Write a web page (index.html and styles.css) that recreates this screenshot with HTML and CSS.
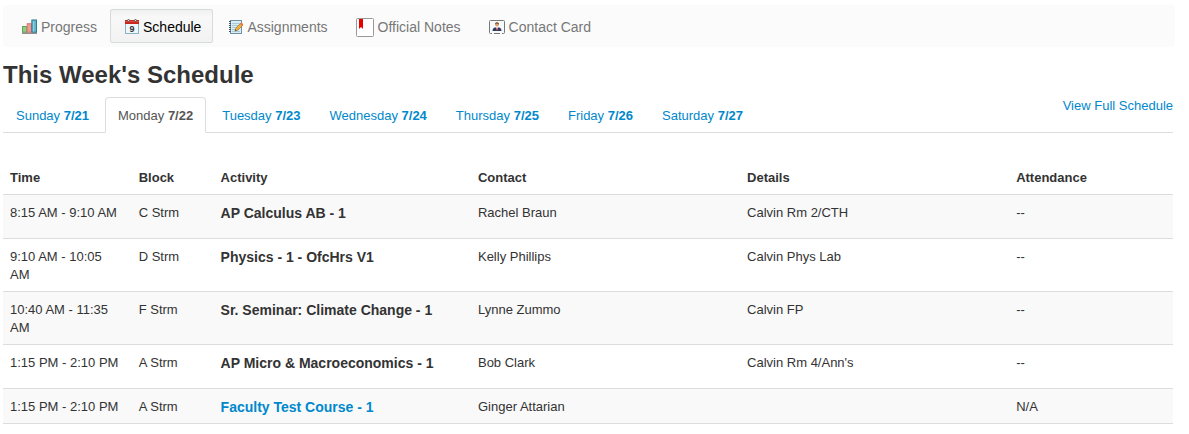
FILE: index.html
```
<!DOCTYPE html>
<html lang="en">
<head>
  <meta charset="UTF-8" />
  <meta name="viewport" content="width=device-width, initial-scale=1.0" />
  <title>This Week's Schedule</title>
  <link rel="stylesheet" href="styles.css">
</head>
<body>
  <nav class="navbar">
    <a href="#progress">
      <svg class="icon" width="15" height="16" viewBox="0 0 16 16">
        <rect x="0" y="14" width="16" height="1" fill="#4a3c3c" />
        <rect x="0.5" y="7.5" width="4.5" height="6" fill="#8fce85" stroke="#5aa357" />
        <rect x="5.5" y="4.5" width="4.5" height="9" fill="#f29a94" stroke="#dd6f6a" />
        <rect x="10.5" y="0.5" width="5" height="13" fill="#62b5cb" stroke="#29758f" />
        <rect x="12" y="2" width="1" height="11" fill="#9cd7e4" />
      </svg>
      Progress
    </a>
    <a href="#schedule" class="active">
      <svg class="icon" width="14" height="16" viewBox="1 0 14 16">
        <rect x="1.5" y="1.5" width="13" height="13" fill="#edf7fc" stroke="#8cb2c8" />
        <rect x="1" y="1" width="14" height="4" fill="#c8281e" />
        <rect x="1" y="2" width="14" height="1" fill="#e04a3c" />
        <circle cx="4.5" cy="1.5" r="1" fill="#ddd" stroke="#555" />
        <circle cx="11.5" cy="1.5" r="1" fill="#ddd" stroke="#555" />
        <text class="day" x="8" y="13" text-anchor="middle">9</text>
      </svg>
      Schedule
    </a>
    <a href="#assignments">
      <svg class="icon" width="14" height="16" viewBox="1 0 14 16">
        <rect x="2.5" y="1.5" width="11" height="13" fill="#d9ecf3" stroke="#6d93a5" />
        <path d="M4 4.5h8M4 6.5h8M4 8.5h7M4 10.5h5M4 12.5h8" stroke="#a9cbd9" />
        <path d="M1 2.5h2M1 4.5h2M1 6.5h2M1 8.5h2M1 10.5h2M1 12.5h2" stroke="#44545c" />
        <path d="M7 12l1-3 5-5 2 2-5 5z" fill="#f5b33c" stroke="#a56b1f" stroke-width="0.7" />
        <path d="M12 5l1.500-1.500 2 2L14 7z" fill="#e4764f" />
        <path d="M7 12l.5-1.500 1 1z" fill="#333" />
      </svg>
      Assignments
    </a>
    <a href="#notes">
      <svg class="icon" width="18" height="19" viewBox="0 0 18 19">
        <rect x="0.5" y="0.5" width="17" height="18" rx="1" fill="#fff" stroke="#999" />
        <path d="M3 1h4v10l-2-2-2 2z" fill="#e60000" />
      </svg>
      Official Notes
    </a>
    <a href="#contact">
      <svg class="icon" width="16" height="16" viewBox="0 0 16 16">
        <rect x="0.5" y="1.500" width="15" height="13" rx="1" fill="#f4f9fc" stroke="#777" />
        <path d="M3.500 12c0-3 2-4 4.500-4s4.500 1 4.500 4z" fill="#2d3b60" />
        <path d="M6.500 8h3L8 11.500z" fill="#fff" />
        <path d="M7.500 8.500h1v3h-1z" fill="#c22" />
        <circle cx="8" cy="5.500" r="2" fill="#dc9c6c" />
        <path d="M6 5.500c0-3 4-3 4 0-1-1.500-3-1.500-4 0z" fill="#6b4020" />
        <path d="M3 14.500h2M11 14.500h2" stroke="#fff" />
      </svg>
      Contact Card
    </a>
  </nav>

  <section id="schedule">
    <h2>This Week's Schedule</h2>

    <div class="tabs">
      <ul>
        <li><a href="#sun">Sunday <strong>7/21</strong></a></li>
        <li class="active"><a href="#mon">Monday <strong>7/22</strong></a></li>
        <li><a href="#tue">Tuesday <strong>7/23</strong></a></li>
        <li><a href="#wed">Wednesday <strong>7/24</strong></a></li>
        <li><a href="#thu">Thursday <strong>7/25</strong></a></li>
        <li><a href="#fri">Friday <strong>7/26</strong></a></li>
        <li><a href="#sat">Saturday <strong>7/27</strong></a></li>
      </ul>
      <a href="#full" class="full">View Full Schedule</a>
    </div>

    <table>
      <colgroup>
        <col class="time" />
        <col class="block" />
        <col class="activity" />
        <col class="contact" />
        <col class="details" />
        <col class="attendance" />
      </colgroup>
      <thead>
        <tr>
          <th>Time</th>
          <th>Block</th>
          <th>Activity</th>
          <th>Contact</th>
          <th>Details</th>
          <th>Attendance</th>
        </tr>
      </thead>
      <tbody>
        <tr>
          <td>8:15 AM - 9:10 AM</td>
          <td>C Strm</td>
          <td><p class="course">AP Calculus AB - 1</p></td>
          <td>Rachel Braun</td>
          <td>Calvin Rm 2/CTH</td>
          <td>--</td>
        </tr>
        <tr>
          <td>9:10 AM - 10:05 AM</td>
          <td>D Strm</td>
          <td><p class="course">Physics - 1 - OfcHrs V1</p></td>
          <td>Kelly Phillips</td>
          <td>Calvin Phys Lab</td>
          <td>--</td>
        </tr>
        <tr>
          <td>10:40 AM - 11:35 AM</td>
          <td>F Strm</td>
          <td><p class="course">Sr. Seminar: Climate Change - 1</p></td>
          <td>Lynne Zummo</td>
          <td>Calvin FP</td>
          <td>--</td>
        </tr>
        <tr>
          <td>1:15 PM - 2:10 PM</td>
          <td>A Strm</td>
          <td><p class="course">AP Micro &amp; Macroeconomics - 1</p></td>
          <td>Bob Clark</td>
          <td>Calvin Rm 4/Ann's</td>
          <td>--</td>
        </tr>
        <tr>
          <td>1:15 PM - 2:10 PM</td>
          <td>A Strm</td>
          <td><a href="#course" class="course">Faculty Test Course - 1</a></td>
          <td>Ginger Attarian</td>
          <td></td>
          <td>N/A</td>
        </tr>
      </tbody>
    </table>
  </section>
</body>
</html>
```
FILE: styles.css
```
body {
  font-family: "Liberation Sans", Arial, sans-serif;
  font-size: 13px;
  line-height: 18px;
  color: #333;
  background: #fff;
  margin: 5px 14px 10px 3px;
}
a {
  color: #0088cc;
  text-decoration: none;
}
.navbar {
  display: flex;
  gap: 1px;
  padding: 4px;
  background: #fbfbfb;
  border-radius: 4px;
}
.navbar a {
  display: flex;
  align-items: center;
  gap: 4px;
  box-sizing: border-box;
  height: 34px;
  padding: 2px 11px 0 14px;
  border: 1px solid transparent;
  border-radius: 2px;
  font-size: 14px;
  color: #777;
}
.navbar a.active {
  color: #000;
  background: linear-gradient(#f0f0f0, #f8f8f8 20%, #f2f2f2);
  border-color: #d6dcdc;
}
.icon {
  flex: none;
}
.day {
  font-size: 9px;
  font-weight: bold;
  fill: #333;
}
#schedule {
  margin-right: 2px;
}
h2 {
  font-size: 24px;
  line-height: 36px;
  margin: 10px 0 4px;
}
.tabs {
  display: flex;
  justify-content: space-between;
  align-items: flex-start;
  border-bottom: 1px solid #ddd;
  margin-bottom: 27px;
}
.tabs ul {
  display: flex;
  gap: 3px;
  list-style: none;
  margin: 0 0 -1px;
  padding: 0;
}
.tabs li a {
  display: block;
  padding: 9px 12px 7px;
  border: 1px solid transparent;
  border-radius: 4px 4px 0 0;
}
.tabs .active a {
  color: #555;
  background: #fff;
  border-color: #ddd #ddd #fff;
}
table {
  width: 100%;
  table-layout: fixed;
  border-collapse: separate;
  border-spacing: 0;
  border-bottom: 1px solid #ddd;
}
th, td {
  padding: 9px 8px 7px 7px;
  text-align: left;
  vertical-align: top;
}
td {
  border-top: 1px solid #ddd;
}
tbody tr:nth-child(odd) {
  background: #f9f9f9;
}
.course {
  display: block;
  font-size: 14px;
  font-weight: bold;
}
p.course {
  margin: 0 0 9px;
}
.time {
  width: 11%;
}
.block {
  width: 7%;
}
.activity {
  width: 22%;
}
.contact, .details {
  width: 23%;
}
.attendance {
  width: 14%;
}
```
